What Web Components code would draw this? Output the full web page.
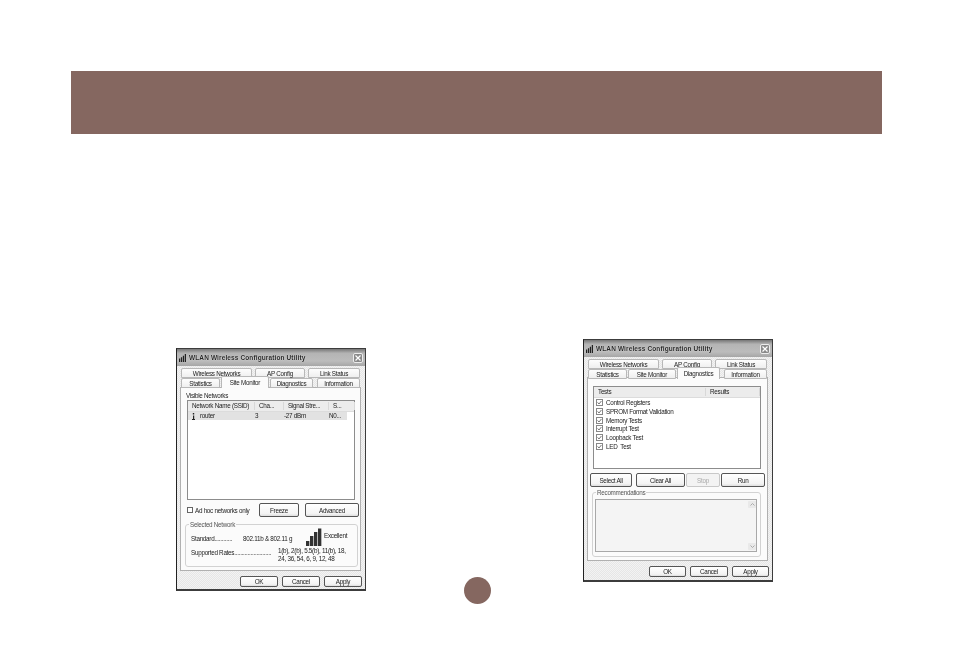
<!DOCTYPE html>
<html>
<head>
<meta charset="utf-8">
<style>
  html, body { margin: 0; background: #fff; }
  body { width: 954px; height: 664px; overflow: hidden; position: relative; font-family: "Liberation Sans", Arial, sans-serif; }
  .stage { display: flex; align-items: flex-start; padding-left: 176px; gap: 217px; }
  .first { margin-top: 214px; }
  .second { margin-top: 205px; --strip-h: 19px; }
</style>
</head>
<body>
<page-banner></page-banner>
<div class="stage">
  <wlan-dialog class="first" active="Site Monitor" ok="38" cancel="38" apply="38">
    <panel-label>Visible Networks</panel-label>
    <network-list></network-list>
    <network-options></network-options>
    <group-box label="Selected Network" width="173" height="43" left="4" top="7"><selected-network></selected-network></group-box>
  </wlan-dialog>
  <wlan-dialog class="second" active="Diagnostics" ok="37" cancel="38" apply="37">
    <test-list></test-list>
    <test-buttons></test-buttons>
    <group-box label="Recommendations" width="169" height="65" left="4" top="5"><recommend-box></recommend-box></group-box>
  </wlan-dialog>
</div>
<page-number></page-number>

<script>
'use strict';

(function() {
  // small helper so every element below only has to give its markup
  class Base extends HTMLElement {
    constructor() {
      super();
      this.attachShadow({ mode: 'open' });
    }
    connectedCallback() {
      this.shadowRoot.innerHTML = this.render();
    }
  }

  class PageBanner extends Base {
    render() {
      return `<style>
        :host { display: block; margin: 71px 72px 0 71px; height: 63px; background: #856760; }
      </style>`;
    }
  }

  class PageNumber extends Base {
    render() {
      return `<style>
        :host { display: block; position: absolute; left: 464px; top: 577px; width: 27px; height: 27px; border-radius: 50%; background: #856760; }
      </style>`;
    }
  }

  class WlanButton extends Base {
    render() {
      const w = this.getAttribute('w') || 38;
      const h = this.getAttribute('h') || 11;
      const off = this.hasAttribute('disabled');
      return `<style>
        :host { display: block; flex: none; }
        div {
          box-sizing: border-box; width: ${w}px; height: ${h}px;
          display: flex; align-items: center; justify-content: center;
          border: 1px solid ${off ? '#c8c8c8' : '#555'}; border-radius: 2px;
          background: ${off ? '#f3f3f0' : 'linear-gradient(#ffffff, #f3f3f0 80%, #dedeDa)'};
          color: ${off ? '#aaa' : '#222'}; font-size: 6.3px; letter-spacing: -0.27px; white-space: nowrap;
        }
      </style><div><slot></slot></div>`;
    }
  }

  class WlanTab extends Base {
    render() {
      const w = this.getAttribute('w');
      const on = this.hasAttribute('active');
      return `<style>
        :host { display: block; flex: none; position: relative; ${on ? 'z-index: 2;' : ''} }
        div {
          box-sizing: border-box; width: ${w}px; height: ${on ? 12 : 10}px;
          ${on ? 'margin-top: -2px;' : ''}
          display: flex; align-items: center; justify-content: center;
          border: 1px solid #b8b8b4; ${on ? 'border-bottom: 0;' : ''}
          border-radius: 2px 2px 0 0;
          background: ${on ? '#fbfbf8' : 'linear-gradient(#fdfdfd, #efefec)'};
          color: #222; font-size: 6.3px; letter-spacing: -0.27px; white-space: nowrap;
        }
      </style><div><slot></slot></div>`;
    }
  }

  class WlanTabs extends Base {
    render() {
      const active = this.getAttribute('active');
      const tab = (name, w) => `<wlan-tab w="${w}" ${name === active ? 'active' : ''}>${name}</wlan-tab>`;
      return `<style>
        :host { display: block; flex: none; height: var(--strip-h, 20px); position: relative; z-index: 2; }
        .back, .front { display: flex; padding-left: 4px; }
        .back { gap: 3px; height: 10px; padding-top: 1px; }
        .front { gap: 1px; height: 9px; position: relative; }
        .front wlan-tab:nth-child(3) { margin-right: 3px; }
      </style>
      <div class="back">${tab('Wireless Networks', 71)}${tab('AP Config', 50)}${tab('Link Status', 52)}</div>
      <div class="front">${tab('Statistics', 39)}${tab('Site Monitor', 48)}${tab('Diagnostics', 43)}${tab('Information', 43)}</div>`;
    }
  }

  class WlanDialog extends Base {
    render() {
      return `<style>
        :host { display: block; flex: none; filter: blur(0.35px) grayscale(1); }
        .win {
          box-sizing: border-box; width: 190px; height: 243px;
          border: 1px solid #3c3c3c; border-left-color: #222; border-bottom-width: 2px;
          background: repeating-conic-gradient(#e6e6e6 0 25%, #f3f3f3 0 50%) 0 0 / 2px 2px;
          display: flex; flex-direction: column;
        }
        .title {
          height: 17px; flex: none; box-sizing: border-box; padding: 0 2px 0 2px;
          display: flex; align-items: center; gap: 3px;
          background: linear-gradient(#777, #b4b4b4 25%, #bcbcbc 70%, #a6a6a6);
          font: bold 6.5px "Liberation Sans", sans-serif; letter-spacing: 0.12px; color: #262626; white-space: nowrap;
          text-shadow: 0 0 1px #fff;
        }
        .title svg { flex: none; }
        .title span { flex: 1; }
        .close {
          flex: none; width: 10px; height: 10px; box-sizing: border-box; border: 1px solid #ececec;
          border-radius: 2px; background: #8a8a8a; display: flex; align-items: center; justify-content: center;
        }
        wlan-tabs { margin-top: 1px; }
        .panel {
          box-sizing: border-box; flex: none; height: 184px; margin: 0 4px 0 3px;
          border: 1px solid #b0b0ac; background: #fbfbf8;
          display: flex; flex-direction: column; position: relative; z-index: 1;
        }
        .foot { display: flex; justify-content: flex-end; gap: 4px; padding: 5px 3px 0 0; }
      </style>
      <div class="win">
        <div class="title">
          <svg width="7" height="8" viewBox="0 0 8 9"><path d="M0 5h1.4v4H0zM2.2 3.6h1.4V9H2.2zM4.4 2h1.4v7H4.4zM6.6 0H8v9H6.6z" fill="#222"/></svg>
          <span>WLAN Wireless Configuration Utility</span>
          <div class="close"><svg width="6" height="6" viewBox="0 0 6 6"><path d="M0.5 0.5l5 5M5.5 0.5l-5 5" stroke="#fff" stroke-width="1.2"/></svg></div>
        </div>
        <wlan-tabs active="${this.getAttribute('active')}"></wlan-tabs>
        <div class="panel"><slot></slot></div>
        <div class="foot">
          <wlan-button w="${this.getAttribute('ok')}">OK</wlan-button>
          <wlan-button w="${this.getAttribute('cancel')}">Cancel</wlan-button>
          <wlan-button w="${this.getAttribute('apply')}">Apply</wlan-button>
        </div>
      </div>`;
    }
  }

  class PanelLabel extends Base {
    render() {
      return `<style>
        :host { display: block; box-sizing: border-box; height: 12px; padding: 3px 0 0 5px; font-size: 6.3px; letter-spacing: -0.27px; line-height: 9px; color: #222; }
      </style><slot></slot>`;
    }
  }

  class ListHeader extends Base {
    render() {
      const cols = (this.getAttribute('cols') || '').split('|');
      const cells = cols.map(c => {
        const [name, w] = c.split(':');
        return `<div style="width:${w}px">${name}</div>`;
      }).join('');
      return `<style>
        :host { display: block; }
        .head { display: flex; box-sizing: border-box; height: 11px; background: #ecece8; border-bottom: 1px solid #dcdcd6; font-size: 6.3px; letter-spacing: -0.27px; color: #222; }
        .head div { box-sizing: border-box; flex: none; padding-left: 4px; white-space: nowrap; border-right: 1px solid #d8d8d2; height: 8px; margin-top: 1px; line-height: 8px; }
      </style><div class="head">${cells}</div>`;
    }
  }

  class NetworkList extends Base {
    render() {
      return `<style>
        :host { display: block; box-sizing: border-box; margin-left: 6px; width: 168px; height: 100px; border: 1px solid #8c8c8c; background: #fff; font-size: 6.3px; letter-spacing: -0.27px; color: #222; }
        .row { display: grid; grid-template-columns: 67px 29px 45px 18px; width: 159px; height: 8px; line-height: 8px; background: #e2e2de; }
        .name { display: flex; align-items: center; gap: 5px; padding-left: 4px; }
        .name svg { flex: none; }
      </style>
      <list-header cols="Network Name (SSID):67|Cha...:29|Signal Stre...:45|S...:26"></list-header>
      <div class="row">
        <div class="name"><svg width="3" height="7" viewBox="0 0 3 7"><path d="M0.8 0h1.4v1.4H0.8zM1 2.4h1.2V6H3v1H0V6h1z" fill="#222"/></svg>router</div>
        <div>3</div><div>-27 dBm</div><div>N0...</div>
      </div>`;
    }
  }

  class NetworkOptions extends Base {
    render() {
      return `<style>
        :host { display: flex; align-items: center; height: 14px; margin: 3px 0 0 6px; font-size: 6.3px; letter-spacing: -0.27px; color: #222; }
        .box { width: 6px; height: 6px; box-sizing: border-box; border: 1px solid #666; background: #fff; margin-right: 2px; flex: none; }
        .text { width: 64px; flex: none; white-space: nowrap; }
        .btns { display: flex; gap: 6px; }
      </style>
      <div class="box"></div><div class="text">Ad hoc networks only</div>
      <div class="btns"><wlan-button w="40" h="14">Freeze</wlan-button><wlan-button w="54" h="14">Advanced</wlan-button></div>`;
    }
  }

  class GroupBox extends Base {
    render() {
      const a = n => this.getAttribute(n);
      return `<style>
        :host { display: block; box-sizing: border-box; position: relative; margin: ${a('top')}px 0 0 ${a('left')}px; width: ${a('width')}px; height: ${a('height')}px; border: 1px solid #d2d2cc; border-radius: 3px; }
        .legend { position: absolute; left: 3px; top: -4px; padding: 0 1px; background: #fbfbf8; font-size: 6.3px; letter-spacing: -0.27px; line-height: 7px; color: #555; white-space: nowrap; }
      </style><div class="legend">${a('label')}</div><slot></slot>`;
    }
  }

  class SelectedNetwork extends Base {
    render() {
      return `<style>
        :host { display: grid; grid-template-columns: 52px 63px 1fr; grid-template-rows: 24px 1fr; font-size: 6.3px; letter-spacing: -0.27px; line-height: 8px; color: #222; padding-left: 5px; white-space: nowrap; }
        .l1 { padding-top: 10px; }
        .sig { display: flex; align-items: flex-start; padding-top: 3px; }
        .sig span { margin-top: 4px; margin-left: 0; }
        .leader { grid-column: 1 / 3; grid-row: 2; }
        .vals { grid-column: 2 / 4; grid-row: 2; margin-left: 35px; margin-top: -2px; }
      </style>
      <div class="l1">Standard............</div>
      <div class="l1">802.11b &amp; 802.11 g</div>
      <div class="sig">
        <svg width="18" height="18" viewBox="0 0 18 18"><path d="M0 13h3v5H0zM4 8h3v10H4zM8 4h3v14H8zM12 0.5h3V18h-3z" fill="#333"/><path d="M3 13h.7v5H3zM7 8h.7v10H7zM11 4h.7v14H11zM15 .5h.7V18H15z" fill="#999"/></svg>
        <span>Excellent</span>
      </div>
      <div class="leader">Supported Rates.........................</div>
      <div class="vals">1(b), 2(b), 5.5(b), 11(b), 18,<br>24, 36, 54, 6, 9, 12, 48</div>`;
    }
  }

  class TestList extends Base {
    render() {
      const tests = ['Control Registers', 'SPROM Format Validation', 'Memory Tests', 'Interrupt Test', 'Loopback Test', 'LED  Test'];
      const rows = tests.map(t => `<div class="t"><svg width="7" height="7" viewBox="0 0 7 7"><rect x=".5" y=".5" width="6" height="6" fill="#fff" stroke="#888"/><path d="M1.6 3.4l1.4 1.6 2.4-3" fill="none" stroke="#777"/></svg><span>${t}</span></div>`).join('');
      return `<style>
        :host { display: block; box-sizing: border-box; margin: 8px 0 0 5px; width: 168px; height: 83px; border: 1px solid #8c8c8c; background: #fff; font-size: 6.3px; letter-spacing: -0.27px; color: #222; }
        .rows { padding-left: 2px; }
        .t { display: flex; align-items: center; gap: 3px; height: 8.85px; white-space: pre; }
        .t svg { flex: none; }
      </style>
      <list-header cols="Tests:112|Results:54"></list-header>
      <div class="rows">${rows}</div>`;
    }
  }

  class TestButtons extends Base {
    render() {
      return `<style>
        :host { display: flex; margin: 4px 0 0 2px; }
      </style>
      <wlan-button w="42" h="14" style="margin-right:4px">Select All</wlan-button>
      <wlan-button w="49" h="14" style="margin-right:1px">Clear All</wlan-button>
      <wlan-button w="34" h="14" disabled style="margin-right:1px">Stop</wlan-button>
      <wlan-button w="44" h="14">Run</wlan-button>`;
    }
  }

  class RecommendBox extends Base {
    render() {
      return `<style>
        :host { display: flex; box-sizing: border-box; margin: 6px 0 0 2px; width: 162px; height: 53px; border: 1px solid #a8a8a2; background: #f4f4f1; }
        .area { flex: 1; }
        .bar { width: 8px; display: flex; flex-direction: column; justify-content: space-between; padding: 1px 0; }
        .bar div { height: 7px; background: #e9e9e5; border-radius: 1px; display: flex; align-items: center; justify-content: center; }
      </style>
      <div class="area"></div>
      <div class="bar">
        <div><svg width="5" height="3" viewBox="0 0 5 3"><path d="M0.5 2.5l2-2 2 2" fill="none" stroke="#aaa"/></svg></div>
        <div><svg width="5" height="3" viewBox="0 0 5 3"><path d="M0.5 0.5l2 2 2-2" fill="none" stroke="#aaa"/></svg></div>
      </div>`;
    }
  }

  customElements.define('page-banner', PageBanner);
  customElements.define('page-number', PageNumber);
  customElements.define('wlan-button', WlanButton);
  customElements.define('wlan-tab', WlanTab);
  customElements.define('wlan-tabs', WlanTabs);
  customElements.define('wlan-dialog', WlanDialog);
  customElements.define('panel-label', PanelLabel);
  customElements.define('list-header', ListHeader);
  customElements.define('network-list', NetworkList);
  customElements.define('network-options', NetworkOptions);
  customElements.define('group-box', GroupBox);
  customElements.define('selected-network', SelectedNetwork);
  customElements.define('test-list', TestList);
  customElements.define('test-buttons', TestButtons);
  customElements.define('recommend-box', RecommendBox);
})();
</script>
</body>
</html>
